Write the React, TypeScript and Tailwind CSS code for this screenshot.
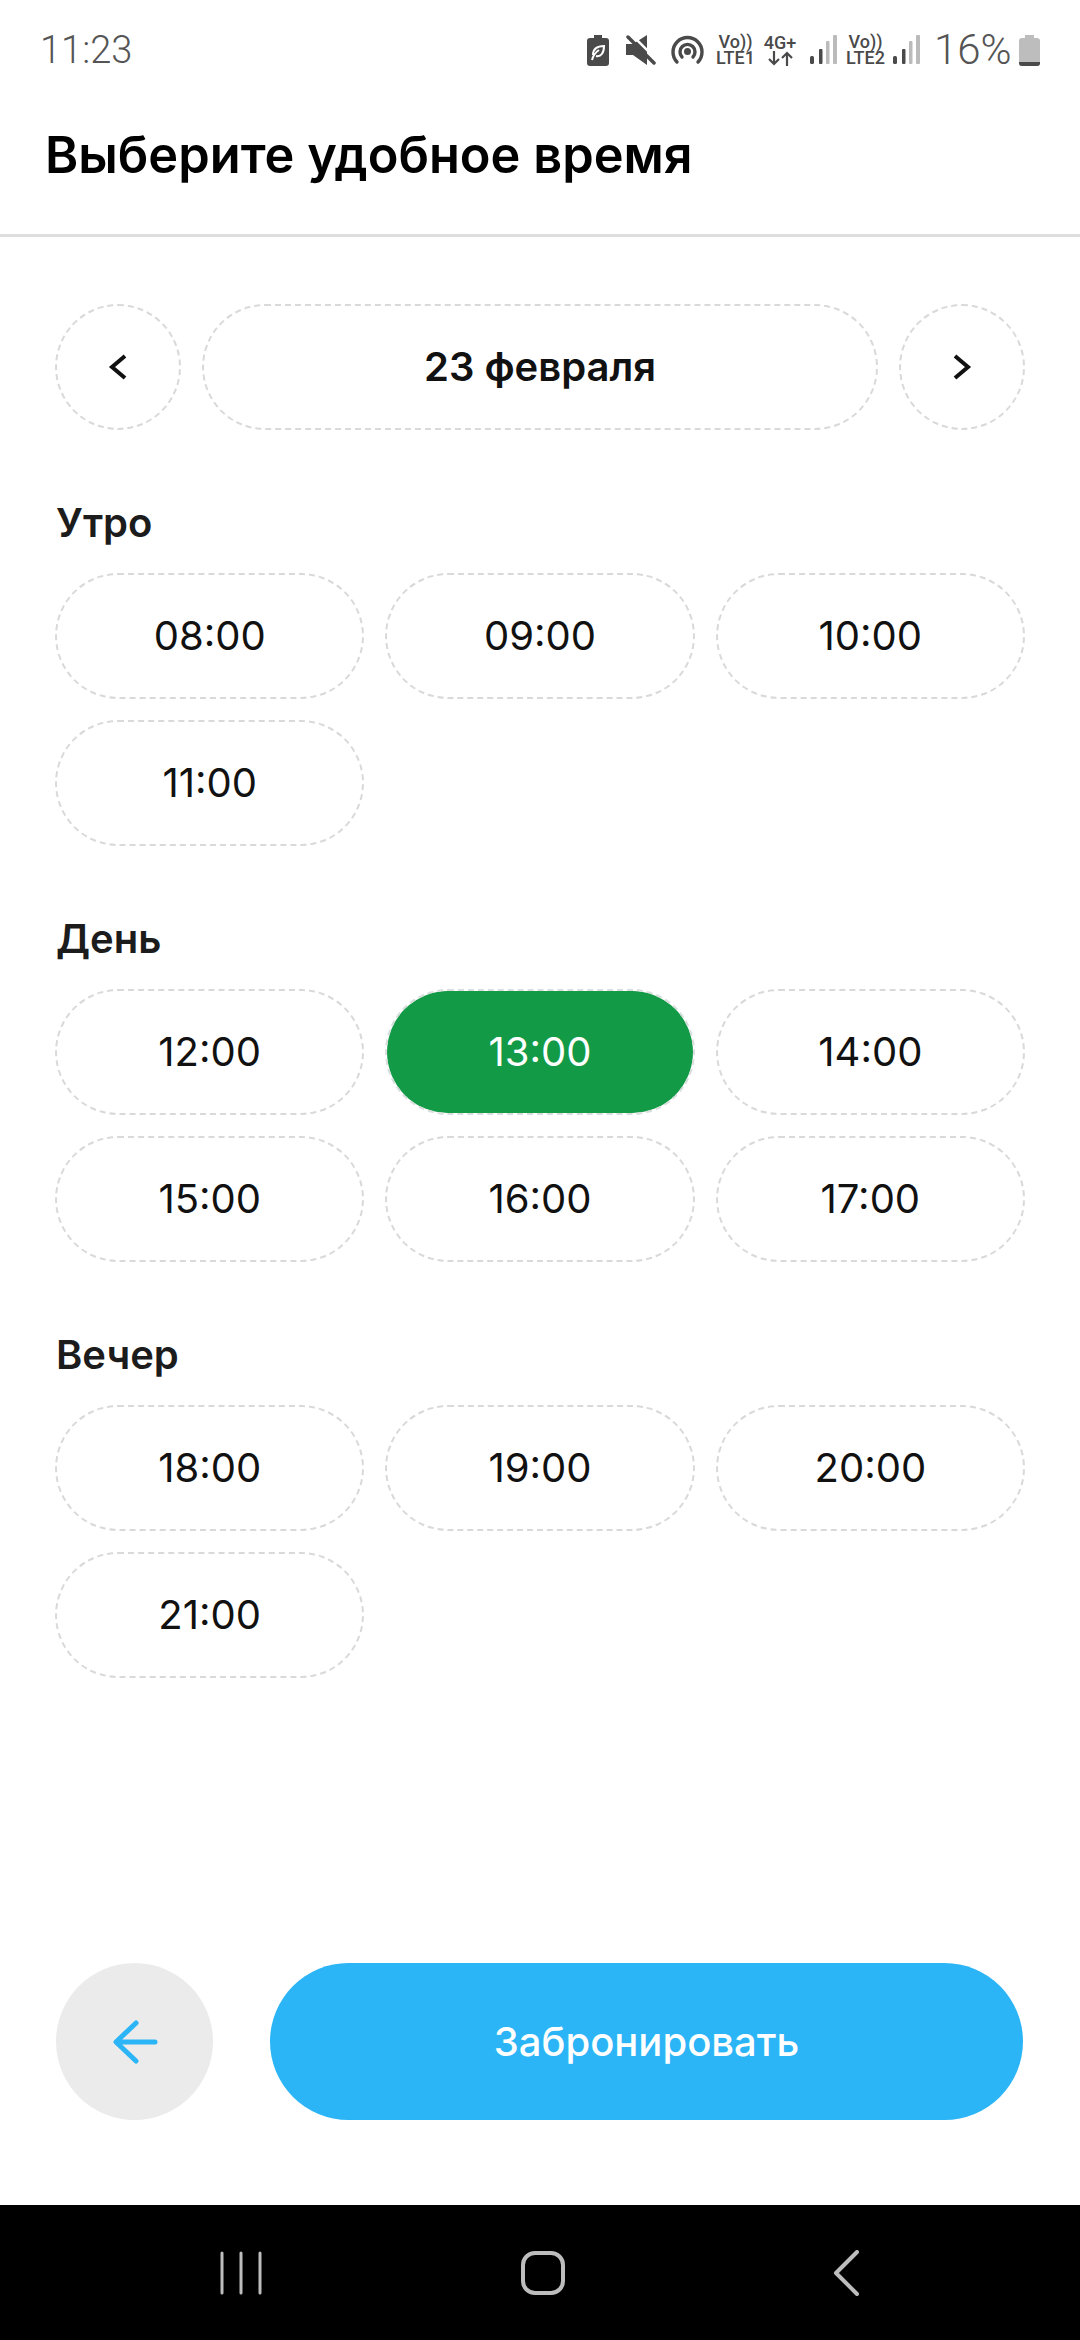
const morning = ['08:00', '09:00', '10:00', '11:00'];
const day = ['12:00', '13:00', '14:00', '15:00', '16:00', '17:00'];
const evening = ['18:00', '19:00', '20:00', '21:00'];

function Signal() {
  return (
    <svg width="27" height="30" viewBox="0 0 27 30">
      <rect x="0" y="21" width="4" height="8" rx="1.5" fill="#4a4a4a" />
      <rect x="9" y="14" width="3.5" height="15" rx="1" fill="#4a4a4a" />
      <rect x="16" y="6" width="3.5" height="23" rx="1" fill="#bbb" />
      <rect x="23" y="0" width="4" height="29" rx="1" fill="#bbb" />
    </svg>
  );
}

function VoLabel({ name }: { name: string }) {
  return (
    <div className="flex w-[39px] flex-col items-center font-['Roboto',sans-serif] text-[18px] leading-[16px] font-medium text-[#4a4a4a]">
      <span>Vo))</span>
      <span>{name}</span>
    </div>
  );
}

function StatusBar() {
  return (
    <div className="flex h-[72px] items-end justify-between pr-[40px] pl-[40px] font-['Roboto',sans-serif] text-[#555]">
      <span className="text-[38px] leading-[44px] font-light">11:23</span>
      <div className="flex h-[44px] items-center">
        <svg width="22" height="31" viewBox="0 0 22 31">
          <path d="M7 0h8v3h4a3 3 0 0 1 3 3v22a3 3 0 0 1-3 3H3a3 3 0 0 1-3-3V6a3 3 0 0 1 3-3h4z" fill="#4a4a4a" />
          <path d="M6 20c0-6 4-9 11-9 0 7-3 11-8 10M5 25c1-4 4-8 7-10" stroke="#fff" strokeWidth="2" fill="none" />
        </svg>
        <svg className="ml-[17px]" width="30" height="30" viewBox="0 0 30 30">
          <path d="M0 9h7L21 0v30L7 20H0z" fill="#4a4a4a" />
          <path d="M5 -1l27 27" stroke="#fff" strokeWidth="2.5" />
          <path d="M2 2l26 26" stroke="#4a4a4a" strokeWidth="3.5" strokeLinecap="round" />
        </svg>
        <svg className="ml-[15px]" width="33" height="30" viewBox="0 0 33 30" fill="none" stroke="#4a4a4a" strokeWidth="3.4" strokeLinecap="round">
          <path d="M6 27A14.5 14.5 0 1 1 27 27" />
          <path d="M11 22a7.5 7.5 0 1 1 11 0" />
          <circle cx="16.5" cy="16.5" r="1.8" fill="#4a4a4a" />
        </svg>
        <div className="ml-[12px]">
          <VoLabel name="LTE1" />
        </div>
        <div className="ml-[8px] flex w-[34px] flex-col items-center font-['Roboto',sans-serif] text-[18px] leading-[16px] font-medium text-[#4a4a4a]">
          <span>4G+</span>
          <svg width="25" height="15" viewBox="0 0 25 15" fill="none" stroke="#4a4a4a" strokeWidth="2.2">
            <path d="M6 0v13M1 8l5 5 5-5M19 15V2M14 7l5-5 5 5" />
          </svg>
        </div>
        <div className="ml-[13px]">
          <Signal />
        </div>
        <div className="ml-[9px]">
          <VoLabel name="LTE2" />
        </div>
        <div className="ml-[8px]">
          <Signal />
        </div>
        <span className="ml-[14px] w-[79px] text-[42px] leading-[44px] font-light whitespace-nowrap">16%</span>
        <svg className="ml-[6px]" width="21" height="31" viewBox="0 0 21 31">
          <path d="M6 0h9v3h3a3 3 0 0 1 3 3v22a3 3 0 0 1-3 3H3a3 3 0 0 1-3-3V6a3 3 0 0 1 3-3h3z" fill="#bdbdbd" />
          <path d="M0 27h21v1a3 3 0 0 1-3 3H3a3 3 0 0 1-3-3z" fill="#4a4a4a" />
        </svg>
      </div>
    </div>
  );
}

function Slot({ time, active }: { time: string; active?: boolean }) {
  return (
    <button
      className={
        active
          ? "flex h-[126px] items-center justify-center rounded-full border-2 border-dashed border-[#d8dedb] bg-[#129a46] bg-clip-padding text-[40px] text-white"
          : "flex h-[126px] items-center justify-center rounded-full border-2 border-dashed border-[#d9d9d9] text-[40px] text-[#111]"
      }
    >
      {time}
    </button>
  );
}

function Section({ title, times, active }: { title: string; times: string[]; active?: string }) {
  return (
    <section className="flex flex-col">
      <h2 className="mb-[26px] h-[48px] pl-[1px] text-[40px] leading-[48px] font-semibold text-[#1c1c1c]">{title}</h2>
      <div className="grid grid-cols-3 gap-[21px]">
        {times.map((t) => (
          <Slot key={t} time={t} active={t === active} />
        ))}
      </div>
    </section>
  );
}

export default function App() {
  return (
    <div className="flex h-[2340px] w-[1080px] flex-col bg-white font-['Inter',sans-serif]">
      <StatusBar />
      <header className="flex h-[165px] items-center border-b-[3px] border-[#dedede] pt-[3px] pl-[45px]">
        <h1 className="text-[50.5px] font-semibold text-black">Выберите удобное время</h1>
      </header>

      <main className="flex flex-1 flex-col px-[55px] pt-[67px]">
        <div className="flex h-[126px] gap-[21px]">
          <button className="flex w-[126px] items-center justify-center rounded-full border-2 border-dashed border-[#d9d9d9]">
            <svg width="20" height="26" viewBox="0 0 20 26" fill="none" stroke="#111" strokeWidth="4">
              <path d="M17 2L4 13l13 11" />
            </svg>
          </button>
          <div className="flex flex-1 items-center justify-center rounded-full border-2 border-dashed border-[#d9d9d9] text-[40px] font-semibold text-[#111]">
            23 февраля
          </div>
          <button className="flex w-[126px] items-center justify-center rounded-full border-2 border-dashed border-[#d9d9d9]">
            <svg width="20" height="26" viewBox="0 0 20 26" fill="none" stroke="#111" strokeWidth="4">
              <path d="M3 2l13 11L3 24" />
            </svg>
          </button>
        </div>

        <div className="mt-[69px] flex flex-col gap-[69px]">
          <Section title="Утро" times={morning} />
          <Section title="День" times={day} active="13:00" />
          <Section title="Вечер" times={evening} />
        </div>
      </main>

      <div className="flex h-[242px] gap-[57px] pr-[57px] pl-[56px]">
        <button className="flex h-[157px] w-[157px] items-center justify-center rounded-full bg-[#ebebeb]">
          <svg width="46" height="44" viewBox="0 0 46 44" fill="none" stroke="#2bb5f7" strokeWidth="5" strokeLinecap="round" strokeLinejoin="round">
            <path d="M24 3L4 22l20 19M5 22h38" />
          </svg>
        </button>
        <button className="flex h-[157px] flex-1 items-center justify-center rounded-full bg-[#2bb5f7] text-[40px] font-medium text-white">
          Забронировать
        </button>
      </div>

      <nav className="flex h-[135px] items-center bg-black pl-[219px]">
        <svg width="44" height="44" viewBox="0 0 44 44" stroke="#bdbdbd" strokeWidth="3" strokeLinecap="round">
          <path d="M3 2v40M22 2v40M41 2v40" />
        </svg>
        <svg className="ml-[258px]" width="44" height="44" viewBox="0 0 44 44" fill="none" stroke="#bdbdbd" strokeWidth="4">
          <rect x="2" y="2" width="40" height="40" rx="12" />
        </svg>
        <svg className="ml-[268px]" width="26" height="46" viewBox="0 0 26 46" fill="none" stroke="#bdbdbd" strokeWidth="4" strokeLinecap="round" strokeLinejoin="round">
          <path d="M24 2L3 23l21 21" />
        </svg>
      </nav>
    </div>
  );
}
